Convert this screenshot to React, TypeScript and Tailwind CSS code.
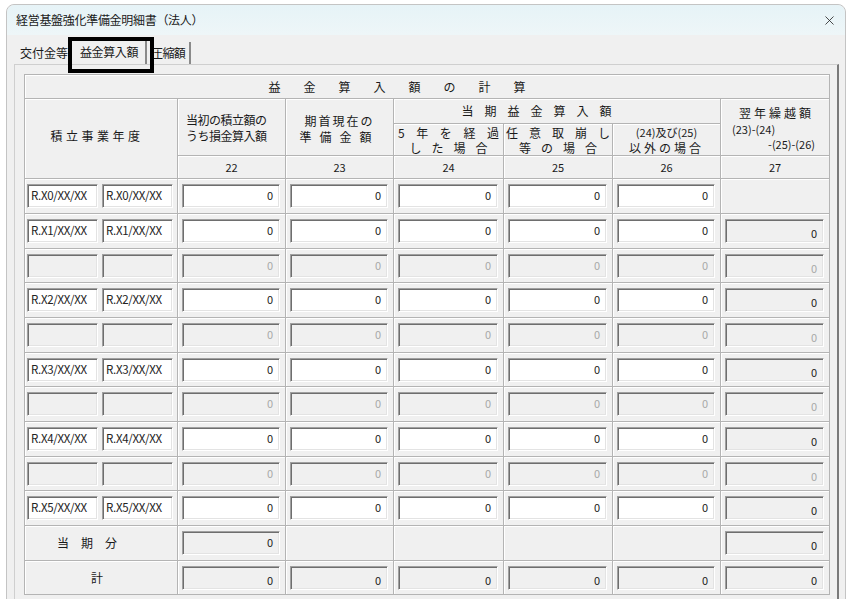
import { X } from "lucide-react";

type Row = { date?: string; last?: boolean };

const rows: Row[] = [
  { date: "R.X0/XX/XX", last: false },
  { date: "R.X1/XX/XX" },
  {},
  { date: "R.X2/XX/XX" },
  {},
  { date: "R.X3/XX/XX" },
  {},
  { date: "R.X4/XX/XX" },
  {},
  { date: "R.X5/XX/XX" },
];

const cell = "bg-[#f0f0f0] shadow-[inset_1px_1px_0_#ffffff]";
const sunken =
  "border border-t-[#a0a0a0] border-l-[#a0a0a0] border-r-white border-b-white shadow-[inset_1px_1px_0_#6e6e6e,inset_-1px_-1px_0_#e3e3e3]";

const Box = ({
  value,
  enabled,
  gray,
  low,
}: {
  value?: string;
  enabled: boolean;
  gray?: boolean;
  low?: boolean;
}) => (
  <div
    className={`flex h-[24px] justify-end pr-[6px] text-[11px] leading-[14px] ${low ? "pt-[6px]" : "pt-[3px]"} ${sunken} ${enabled ? "bg-white" : "bg-[#f0f0f0]"} ${gray ? "text-[#a8a8a8]" : "text-[#222]"}`}
  >
    {value}
  </div>
);

const DateBox = ({ text }: { text?: string }) => (
  <div
    className={`flex h-[24px] flex-1 items-center pl-[3px] text-[11.5px] tracking-[-0.3px] text-[#222] ${sunken} ${text ? "bg-white" : "bg-[#f0f0f0]"}`}
  >
    {text}
  </div>
);

const NumCell = ({ children }: { children?: React.ReactNode }) => (
  <div className={`${cell} px-[4px] pr-[5px] pt-[5px]`}>{children}</div>
);

export default function App() {
  return (
    <div className="h-[599px] w-[850px] overflow-hidden bg-white font-['Noto_Sans_CJK_JP',sans-serif] text-[#1a1a1a]">
      <div className="relative ml-[6px] mt-[4px] h-[620px] w-[840px] rounded-t-[8px] border border-[#c4c4c4] bg-[#f0f0f0]">
        {/* title bar */}
        <div className="flex h-[30px] items-center justify-between rounded-t-[8px] bg-gradient-to-b from-[#e6f3f7] to-[#eef6f8] pl-[9px] pr-[8px]">
          <span className="text-[12px] tracking-[-0.3px]">経営基盤強化準備金明細書（法人）</span>
          <X size={15} strokeWidth={1.3} className="text-[#222]" />
        </div>

        {/* tabs */}
        <div className="flex h-[29px] items-end pl-[7px] text-[12px]">
          <div className="flex h-[22px] w-[58px] items-center pl-[6px]">交付金等</div>
          <div className="flex h-[24px] w-[75px] items-center border-r-2 border-[#8a8a8a] pl-[8px] tracking-[-0.4px]">
            益金算入額
          </div>
          <div className="flex h-[22px] w-[44px] items-center border-r-2 border-[#8a8a8a] pl-[4px] tracking-[-0.6px]">
            圧縮額
          </div>
        </div>

        {/* highlight */}
        <div className="absolute left-[61px] top-[32px] h-[36px] w-[86px] border-[4px] border-black" />

        {/* panel */}
        <div className="ml-[7px] h-[560px] w-[825px] border-l border-t border-[#cfcfcf] border-r-2 border-r-[#7a7a7a] pl-[9px] pt-[9px]">
          <div className="grid w-[806px] grid-cols-[152px_107px_107px_109px_108px_107px_108px] grid-rows-[23px_24px_31px_22px_34px_34px_33px_34px_34px_33px_34px_34px_33px_34px_34px_33px] gap-px border border-[#b4b4b4] bg-[#b4b4b4] text-[12px]">
            {/* header 1 */}
            <div className={`${cell} col-span-7 flex items-center justify-center pr-[37px] tracking-[23px]`}>
              益金算入額の計算
            </div>

            {/* header 2 */}
            <div className={`${cell} row-span-3 flex items-center justify-center pb-[6px] pr-[8px] tracking-[3.5px]`}>
              積立事業年度
            </div>
            <div className={`${cell} row-span-2 flex flex-col justify-center pl-[8px] pt-[2px] leading-[16px] tracking-[-0.5px]`}>
              <span>当初の積立額の</span>
              <span>うち損金算入額</span>
            </div>
            <div className={`${cell} row-span-2 flex flex-col items-center justify-center pt-[4px] leading-[16px]`}>
              <span className="tracking-[2px]">期首現在の</span>
              <span className="tracking-[8px]">準備金額</span>
            </div>
            <div className={`${cell} col-span-3 flex items-center justify-center pr-[30px] tracking-[11px]`}>
              当期益金算入額
            </div>
            <div className={`${cell} row-span-2 flex flex-col whitespace-nowrap pl-[11px] pr-[14px] pt-[6px] leading-[15px]`}>
              <span className="self-center pl-[6px] tracking-[3px]">翌年繰越額</span>
              <span className="mt-[2px] text-[11px]">(23)-(24)</span>
              <span className="self-end text-[11px]">-(25)-(26)</span>
            </div>

            {/* header 3 */}
            <div className={`${cell} flex flex-col justify-center px-[4px] leading-[15px]`}>
              <span className="flex justify-between">
                <span>5</span>
                <span>年</span>
                <span>を</span>
                <span>経</span>
                <span>過</span>
              </span>
              <span className="flex justify-center gap-[10px]">
                <span>し</span>
                <span>た</span>
                <span>場</span>
                <span>合</span>
              </span>
            </div>
            <div className={`${cell} flex flex-col justify-center px-[2px] leading-[15px]`}>
              <span className="flex justify-between">
                <span>任</span>
                <span>意</span>
                <span>取</span>
                <span>崩</span>
                <span>し</span>
              </span>
              <span className="flex justify-center gap-[10px]">
                <span>等</span>
                <span>の</span>
                <span>場</span>
                <span>合</span>
              </span>
            </div>
            <div className={`${cell} flex flex-col items-center justify-center leading-[15px]`}>
              <span className="text-[11px]">(24)及び(25)</span>
              <span className="tracking-[3px]">以外の場合</span>
            </div>

            {/* number row */}
            {["22", "23", "24", "25", "26", "27"].map((n) => (
              <div key={n} className={`${cell} flex items-center justify-center text-[11px]`}>
                {n}
              </div>
            ))}

            {/* data rows */}
            {rows.map((r, i) => {
              const on = !!r.date;
              return [
                <div key={`d${i}`} className={`${cell} flex gap-[4px] pl-[2px] pr-[4px] pt-[5px]`}>
                  <DateBox text={r.date} />
                  <DateBox text={r.date} />
                </div>,
                ...[0, 1, 2, 3, 4].map((c) => (
                  <NumCell key={`c${i}-${c}`}>
                    <Box value="0" enabled={on} gray={!on} />
                  </NumCell>
                )),
                <NumCell key={`l${i}`}>
                  {r.last === false ? null : <Box value="0" enabled={false} gray={!on} low />}
                </NumCell>,
              ];
            })}

            {/* 当期分 */}
            <div className={`${cell} flex items-center justify-center pr-[16px] tracking-[12px]`}>当期分</div>
            <NumCell>
              <Box value="0" enabled={false} />
            </NumCell>
            <div className={cell} />
            <div className={cell} />
            <div className={cell} />
            <div className={cell} />
            <NumCell>
              <Box value="0" enabled={false} low />
            </NumCell>

            {/* 計 */}
            <div className={`${cell} flex items-center justify-center pr-[8px]`}>計</div>
            {[0, 1, 2, 3, 4].map((c) => (
              <NumCell key={`t${c}`}>
                <Box value="0" enabled={false} low />
              </NumCell>
            ))}
            <NumCell>
              <Box value="0" enabled={false} low />
            </NumCell>
          </div>
        </div>
      </div>
    </div>
  );
}
